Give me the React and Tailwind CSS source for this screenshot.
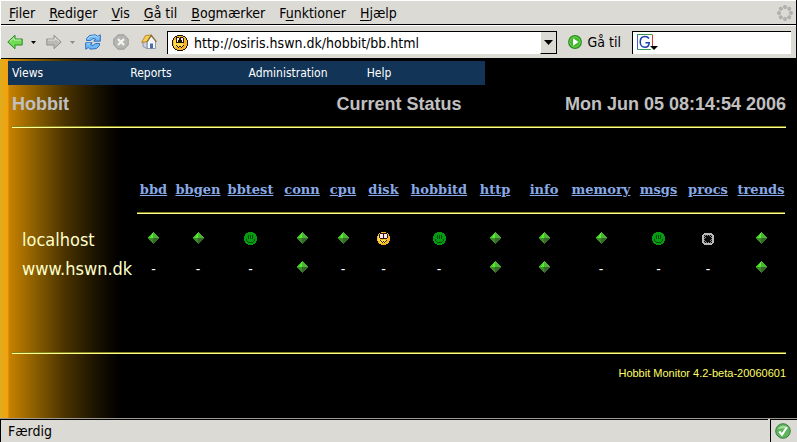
const menus = [
  ["", "F", "iler"],
  ["", "R", "ediger"],
  ["", "V", "is"],
  ["", "G", "å til"],
  ["", "B", "ogmærker"],
  ["F", "u", "nktioner"],
  ["", "H", "jælp"],
];

const tests = ["bbd", "bbgen", "bbtest", "conn", "cpu", "disk", "hobbitd", "http", "info", "memory", "msgs", "procs", "trends"];

const columnWidths = [
  "w-[37px]", "w-[52px]", "w-[53px]", "w-[50px]", "w-[32px]", "w-[49px]", "w-[62px]",
  "w-[50px]", "w-[48px]", "w-[66px]", "w-[49px]", "w-[50px]", "w-[56px]",
];

// g = green, n = recently green, y = recently yellow, c = clear, - = not tested
const hosts = [
  { name: "localhost", status: "ggnggyngggncg" },
  { name: "www.hswn.dk", status: "---g---gg---g" },
];

function Diamond() {
  return (
    <svg width="13" height="13" viewBox="0 0 13 13" className="mx-auto mb-[2px] block" aria-label="green" shapeRendering="crispEdges">
      <path d="M6 0L0 6H6Z" fill="#3fc41f" />
      <path d="M6 0L12 6H6Z" fill="#4cb634" />
      <path d="M0 6L6 12V6Z" fill="#3c8a2a" />
      <path d="M12 6L6 12V6Z" fill="#356a2a" />
      <path d="M5 1h1v5H5zM4 3h1v3H4zM3 5h1v1H3z" fill="#52f02a" />
    </svg>
  );
}

function GreenFace() {
  return (
    <svg width="13" height="13" viewBox="0 0 13 13" className="mx-auto mb-[2px] block" aria-label="recently green" shapeRendering="crispEdges">
      <path d="M4 0h5v1h2v1h1v2h1v5h-1v2h-1v1H9v1H4v-1H2v-1H1V9H0V4h1V2h1V1h2z" fill="#069a12" />
      <path d="M4 3h1v4H4zM6 3h1v4H6zM8 3h1v4H8zM2 7h1v2H2zM10 7h1v2h-1zM3 9h1v1H3zM9 9h1v1H9zM4 10h5v1H4z" fill="#034d08" />
    </svg>
  );
}

function YellowFace({ outlined = false }) {
  return outlined ? (
    <svg width="16" height="16" viewBox="0 0 16 16" className="block shrink-0" aria-hidden="true" shapeRendering="crispEdges">
      <path d="M5 0h6v1h2v1h1v1h1v2h1v6h-1v2h-1v1h-1v1h-2v1H5v-1H3v-1H2v-1H1v-2H0V5h1V3h1V2h1V1h2z" fill="#1c1204" />
      <path d="M5 1h6v1h2v1h1v2h1v6h-1v2h-1v1h-2v1H5v-1H3v-1H2v-2H1V5h1V3h1V2h2z" fill="#f6b524" />
      <path d="M2 5h2v7H2zM4 8h7v4H4z" fill="#ffdc4a" />
      <path d="M4 2h3v1h1v5H4zM8 2h3v1h1v5H8z" fill="#241708" />
      <path d="M5 3h2v4H5zM9 3h2v4H9z" fill="#fff0ee" />
      <path d="M6 5h1v2H6zM9 5h1v2H9zM4 10h1v1H4zM5 11h1v1H5zM6 12h1v1H6zM7 11h2v1H7zM9 12h1v1H9zM10 11h1v1h-1zM11 10h1v1h-1z" fill="#241708" />
    </svg>
  ) : (
    <svg width="13" height="13" viewBox="0 0 13 13" className="mx-auto mb-[2px] block" aria-label="recently yellow" shapeRendering="crispEdges">
      <path d="M4 0h5v1h2v1h1v2h1v5h-1v2h-1v1H9v1H4v-1H2v-1H1V9H0V4h1V2h1V1h2z" fill="#f5b52a" />
      <path d="M1 4h2v5H1zM3 8h6v3H3z" fill="#ffe245" />
      <path d="M3 1h7v1h1v4h-1v1H3V6H2V2h1z" fill="#2b1a12" />
      <path d="M3 2h3v4H3zM7 2h3v4H7z" fill="#f8e6ee" />
      <path d="M3 8h1v1H3zM4 9h1v1H4zM5 10h1v1H5zM6 9h1v1H6zM7 10h1v1H7zM8 9h1v1H8zM9 8h1v1H9z" fill="#3a2404" />
    </svg>
  );
}

function ClearBox() {
  return (
    <svg width="12" height="12" viewBox="0 0 12 12" className="mx-auto mb-[2px] block" aria-label="clear" shapeRendering="crispEdges">
      <path d="M2 0h8v1h1v1h1v8h-1v1h-1v1H2v-1H1v-1H0V2h1V1h1z" fill="#b9b9b9" />
      <path d="M2 2h8v8H2z" fill="#0a0a0a" />
      <path d="M3 2h1v1H3zM5 2h1v1H5zM7 2h1v1H7zM9 2h1v1H9zM2 3h1v1H2zM2 5h1v1H2zM2 7h1v1H2zM9 4h1v1H9zM9 6h1v1H9zM9 8h1v1H9zM2 9h1v1H2zM4 9h1v1H4zM6 9h1v1H6zM8 9h1v1H8zM3 4h1v1H3zM8 3h1v1H8zM3 8h1v1H3zM8 7h1v1H8z" fill="#8e8e8e" />
    </svg>
  );
}

function Status({ code }) {
  if (code === "g") return <Diamond />;
  if (code === "n") return <GreenFace />;
  if (code === "y") return <YellowFace />;
  if (code === "c") return <ClearBox />;
  return "-";
}

function Arrow({ fill, edge, flip }) {
  return (
    <svg width="16" height="16" viewBox="0 0 16 16" className={flip ? "block -scale-x-100" : "block"} aria-hidden="true">
      <path d="M0.8 8L8 1.2V5H15.2V11H8V14.8Z" fill={fill} stroke={edge} strokeLinejoin="round" />
      <path d="M2.8 7.6L7 3.8V6H14" fill="none" stroke="#fff" strokeOpacity=".6" />
    </svg>
  );
}

function Caret({ fill }) {
  return (
    <svg width="5" height="3" viewBox="0 0 5 3" className="block" aria-hidden="true">
      <path d="M0 0H5L2.5 3Z" fill={fill} />
    </svg>
  );
}

function Reload() {
  return (
    <svg width="16" height="16" viewBox="0 0 16 16" className="block" aria-hidden="true">
      <g fill="#6db9f6" stroke="#1f66c0" strokeWidth=".9" strokeLinejoin="round">
        <path d="M1.500 6.500V4.500L4.500 1.500L10.500 .8L12.700 2.400L15.300 .8V7.200H8.800L10.500 5.200L8 4.600L5.500 6.500Z" />
        <path d="M14.500 9.500V11.500L11.500 14.500L5.500 15.200L3.300 13.600L.7 15.200V8.800H7.200L5.500 10.800L8 11.400L10.500 9.500Z" />
      </g>
      <path d="M2.500 5.200L5 2.500L10.200 1.900L12.700 3.500L14.300 2.500M1.700 9.800H5" fill="none" stroke="#c9e6ff" strokeWidth=".8" />
    </svg>
  );
}

function Stop() {
  return (
    <svg width="16" height="16" viewBox="0 0 16 16" className="block" aria-hidden="true">
      <path d="M5 .8H11L15.200 5V11L11 15.200H5L.8 11V5Z" fill="#b4b4b2" stroke="#9a9a98" />
      <path d="M5 5L11 11M11 5L5 11" stroke="#f4f4f2" strokeWidth="2.200" />
    </svg>
  );
}

function Home() {
  return (
    <svg width="16" height="16" viewBox="0 0 16 16" className="block" aria-hidden="true">
      <path d="M10 2L14.500 7V14.500H6V7Z" fill="#f3f5fa" stroke="#7c86a0" strokeWidth=".8" />
      <path d="M2 7.500L6 6.500V14.500L2 12.500Z" fill="#cbd0dc" stroke="#7c86a0" strokeWidth=".8" />
      <path d="M4.500 1.500L10.300 1L6 7.800L.6 8.400Z" fill="#f7cc52" stroke="#a8791c" strokeWidth=".8" />
      <path d="M6 8L10.300 1.400L15.500 7.800" fill="none" stroke="#8c7032" strokeWidth="1.300" />
      <path d="M9 9.500H12V14.500H9Z" fill="#4f6ca6" />
    </svg>
  );
}

function Throbber() {
  const dots = [[8, 2], [12.2, 3.8], [14, 8], [12.2, 12.2], [8, 14], [3.8, 12.2], [2, 8], [3.8, 3.8]];
  return (
    <svg width="16" height="16" viewBox="0 0 16 16" className="block" aria-hidden="true">
      {dots.map(([x, y]) => (
        <circle key={`${x}-${y}`} cx={x} cy={y} r="1.7" fill="#b3b2af" stroke="#9b9a97" strokeWidth=".4" />
      ))}
    </svg>
  );
}

function Go() {
  return (
    <svg width="14" height="14" viewBox="0 0 14 14" className="block" aria-hidden="true">
      <circle cx="7" cy="7" r="6.300" fill="#6fdc52" stroke="#278a1b" strokeWidth="1.200" />
      <circle cx="7" cy="7" r="4.800" fill="#45b832" />
      <path d="M5 3.200L10.500 7L5 10.800Z" fill="#fff" />
    </svg>
  );
}

function Engine() {
  return (
    <svg width="21" height="17" viewBox="0 0 21 17" className="block shrink-0" aria-hidden="true">
      <path d="M.5 15.500V.5" stroke="#3c63c8" />
      <path d="M0 .5H15.500" stroke="#3a9a4c" />
      <path d="M15.500 1V12" stroke="#d63a34" />
      <path d="M.5 15.500H14" stroke="#3a9a4c" />
      <path d="M12 4.500C10.800 2.800 9.300 2.500 8 2.500C5 2.500 3.200 4.900 3.200 8C3.200 11 5 13.300 8 13.300C10 13.300 12 12.300 12.200 8.800H8.500" fill="none" stroke="#1b3fb0" strokeWidth="1.500" />
      <path d="M13 12H21L17 16Z" fill="#000" />
    </svg>
  );
}

function Secure() {
  return (
    <svg width="16" height="16" viewBox="0 0 16 16" className="block" aria-hidden="true">
      <circle cx="8" cy="8" r="7.300" fill="#5fb35c" stroke="#3c8040" />
      <path d="M2.500 6C4 2.500 11 1 13.500 5.500C10 5 6 6 2.500 6Z" fill="#a6dba0" />
      <path d="M4.300 8.500L7 11.800L11.800 4.200" fill="none" stroke="#fff" strokeWidth="2.100" />
    </svg>
  );
}

function Rule() {
  return <hr className="h-[2px] border-0 border-t border-[#85831c] bg-[#ffff90]" />;
}

export default function App() {
  return (
    <div className="flex min-h-screen flex-col bg-black font-['DejaVu_Sans_Condensed','DejaVu_Sans',sans-serif] text-[14px] leading-4 text-black">
      <header className="mr-px border-l border-white bg-[#dcdad5]">
        <nav className="flex h-[25px] items-center border-t border-b border-t-white border-b-black pr-[3px] pl-2" aria-label="Menulinje">
          <div className="flex flex-1 gap-[14px]">
            {menus.map(([before, key, after]) => (
              <button key={key + after} type="button">
                {before}<span className="underline underline-offset-2">{key}</span>{after}
              </button>
            ))}
          </div>
          <Throbber />
        </nav>
        <div className="flex h-[34px] items-center border-t border-b border-t-white border-b-black pr-[5px] pl-[6px]">
          <div className="flex items-center">
            <button type="button" aria-label="Tilbage"><Arrow fill="#6fdc52" edge="#2c8a24" /></button>
            <button type="button" aria-label="Tilbage-historik" className="ml-2"><Caret fill="#000" /></button>
            <button type="button" aria-label="Frem" className="ml-[10px]"><Arrow fill="#b9b9b6" edge="#939390" flip /></button>
            <button type="button" aria-label="Frem-historik" className="ml-2"><Caret fill="#8c8c88" /></button>
            <button type="button" aria-label="Genindlæs" className="ml-[10px]"><Reload /></button>
            <button type="button" aria-label="Stop" className="ml-3"><Stop /></button>
            <button type="button" aria-label="Hjem" className="ml-3"><Home /></button>
          </div>
          <div className="ml-[10px] flex h-[23px] flex-1 items-center border-t border-l border-black bg-white pl-1">
            <YellowFace outlined />
            <input aria-label="Adresse" defaultValue="http://osiris.hswn.dk/hobbit/bb.html" className="ml-[6px] h-5 w-0 flex-1 bg-transparent outline-none" />
            <button type="button" aria-label="Vis adresser" className="flex h-full w-[17px] items-center justify-center border-r border-b border-l border-r-black border-b-black border-l-white bg-[#dcdad5]">
              <svg width="9" height="5" viewBox="0 0 9 5" aria-hidden="true"><path d="M0 0H9L4.500 5Z" fill="#000" /></svg>
            </button>
          </div>
          <button type="button" className="mx-[11px] flex items-center gap-[6px]"><Go />Gå til</button>
          <div className="flex h-[23px] w-[159px] items-center border-t border-l border-black bg-white pl-1">
            <Engine />
            <input aria-label="Søg" className="h-5 w-0 flex-1 bg-transparent outline-none" />
          </div>
        </div>
      </header>

      <main className="flex-1 bg-[linear-gradient(to_right,#dcae20_0px,#eea414_5px,#f2a20c_8px,#c88200_9px,#8a5e00_35px,#4a3300_65px,#1c1300_95px,#000_120px)] pt-[2px] pb-[32px]">
        <nav className="ml-2 grid h-6 w-[477px] max-w-full grid-cols-4 items-center bg-[#123456] pl-1 text-[12px] text-white" aria-label="Hobbit">
          <a href="#views">Views</a>
          <a href="#reports">Reports</a>
          <a href="#administration">Administration</a>
          <a href="#help">Help</a>
        </nav>

        <div className="mr-[11px] ml-3 grid h-[41px] grid-cols-[1fr_auto_1fr] items-center pb-1 font-['Liberation_Sans',Arial,sans-serif] text-[18px] leading-5 font-bold text-[#c0c0c0]">
          <h1>Hobbit</h1>
          <h2>Current Status</h2>
          <p className="text-right">Mon Jun 05 08:14:54 2006</p>
        </div>
        <div className="mr-[11px] ml-3"><Rule /></div>

        <div className="mt-[52px] mr-2 ml-3">
          <table className="w-full table-fixed border-collapse">
            <colgroup>
              <col className="w-[123px]" />
              {tests.map((name, i) => <col key={name} className={columnWidths[i]} />)}
            </colgroup>
            <thead>
              <tr className="h-5 font-['DejaVu_Serif',serif] text-[13px] text-[#87a9e5]">
                <td className="p-0" />
                {tests.map((name) => (
                  <th key={name} scope="col" className="p-0 font-bold whitespace-nowrap">
                    <div className="flex justify-center"><a href={`#${name}`} className="underline">{name}</a></div>
                  </th>
                ))}
              </tr>
              <tr className="h-[25px]">
                <td className="p-0" />
                <td colSpan={13} className="py-0 pr-1 pl-[2px]"><Rule /></td>
              </tr>
            </thead>
            <tbody>
              {hosts.map(({ name, status }) => (
                <tr key={name} className="h-[29px]">
                  <th scope="row" className="py-0 pr-0 pl-[10px] text-left text-[18px] leading-6 font-normal whitespace-nowrap text-[#ffffcc]">{name}</th>
                  {status.split("").map((code, i) => (
                    <td key={tests[i]} className="p-0 text-center text-white"><Status code={code} /></td>
                  ))}
                </tr>
              ))}
            </tbody>
          </table>
        </div>

        <footer className="mt-[69px] mr-[11px] ml-3">
          <Rule />
          <p className="pt-[11px] text-right font-['Liberation_Sans',Arial,sans-serif] text-[11px] text-[#ffff66]">Hobbit Monitor 4.2-beta-20060601</p>
        </footer>
      </main>

      <div className="flex h-6 border-t border-[#9c9890] bg-[#dcdad5]" role="status">
        <div className="flex flex-1 items-center border-t border-l border-black pl-[7px]">Færdig</div>
        <div className="ml-[2px] flex w-[27px] items-center border-t border-l border-black pl-1"><Secure /></div>
      </div>
    </div>
  );
}
